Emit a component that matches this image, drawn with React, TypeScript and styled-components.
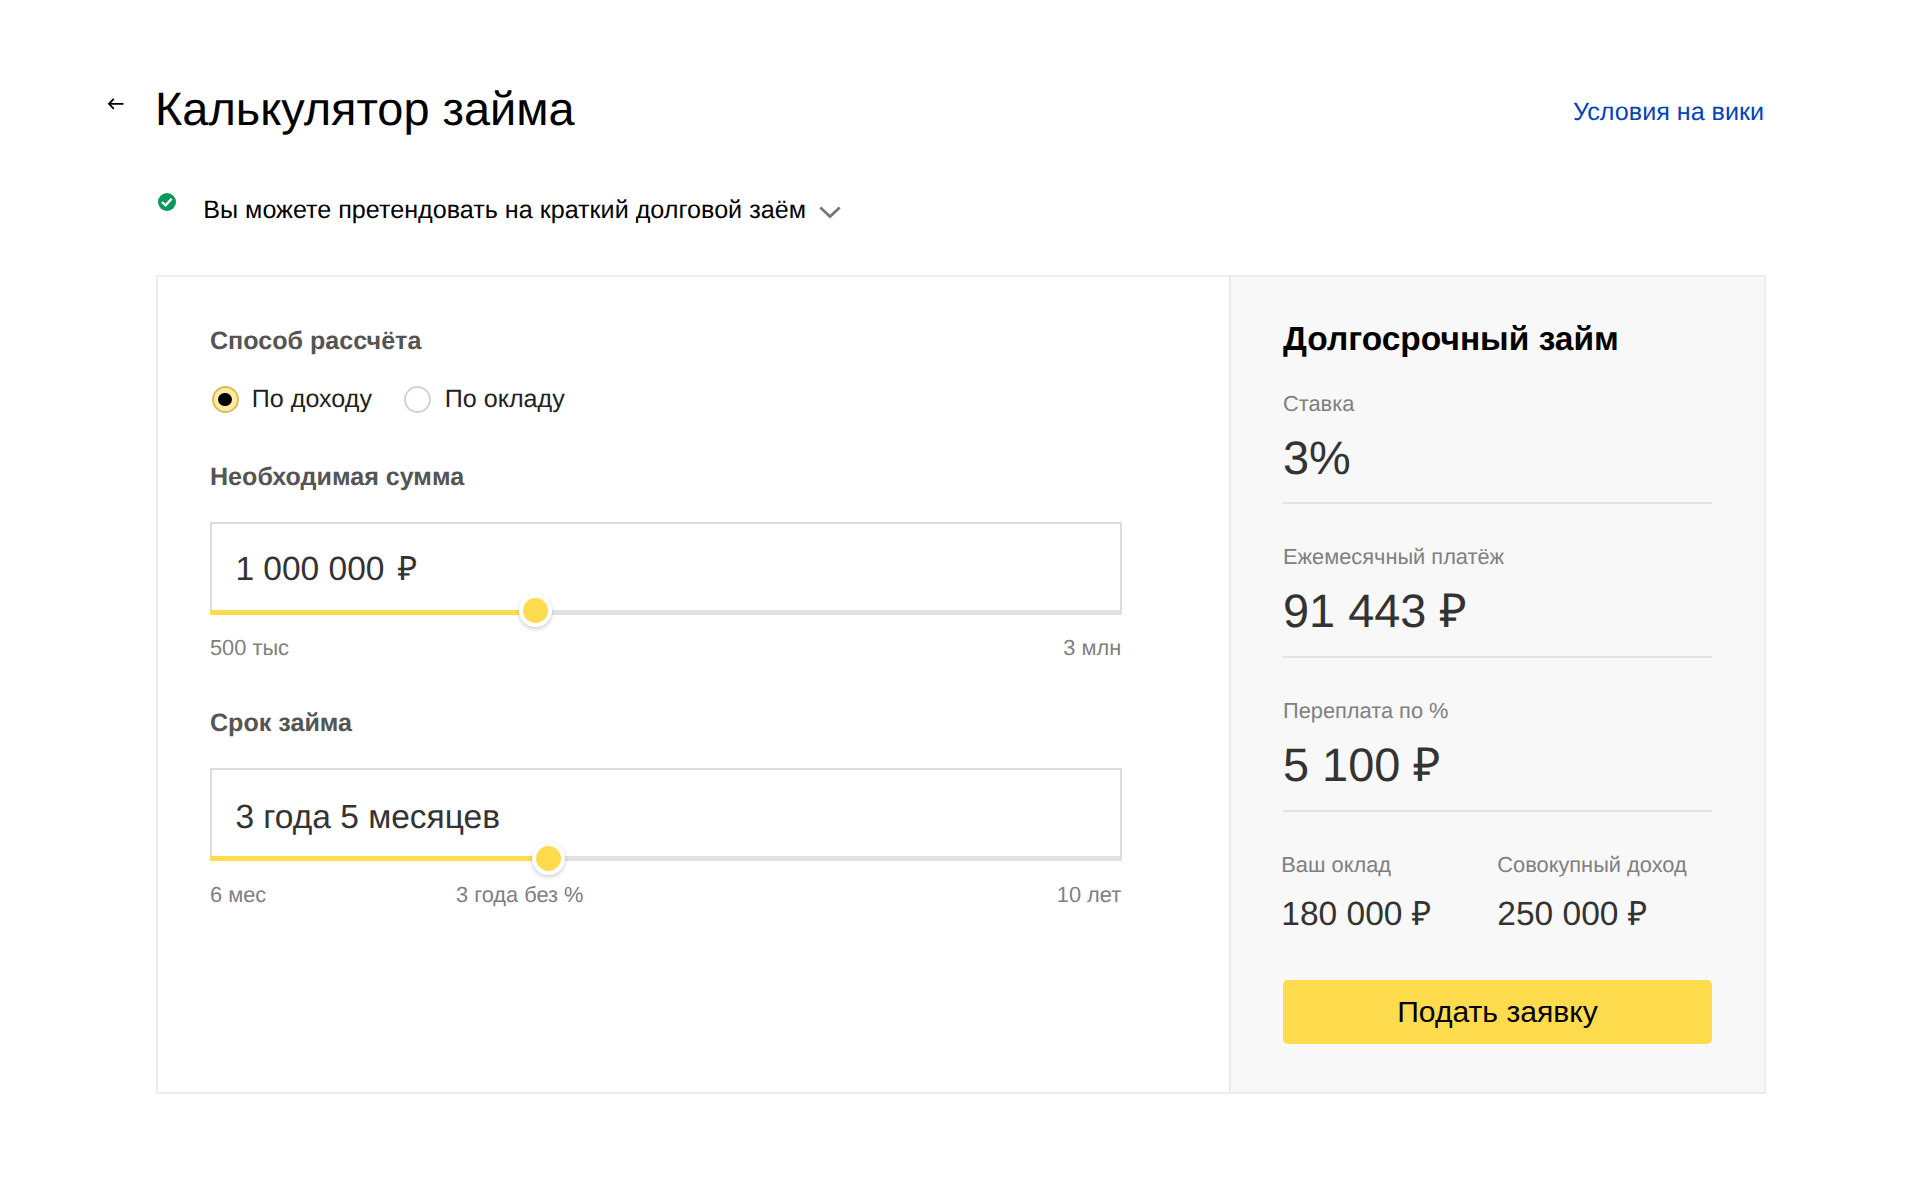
import React, { useState } from "react";
import styled, { createGlobalStyle } from "styled-components";

const GlobalStyle = createGlobalStyle`
  * { box-sizing: border-box; }
  body {
    margin: 0;
    background: #fff;
    color: #000;
    font-family: "Liberation Sans", Arial, sans-serif;
    text-rendering: geometricPrecision;
  }
  h1, h2, h3, p { margin: 0; }
`;

const Page = styled.main`
  width: 1920px;
  height: 1187px;
  padding-top: 79px;
  overflow: hidden;
`;

const Header = styled.header`
  display: flex;
  align-items: flex-start;
  height: 60px;
  padding: 0 156px 0 106px;
`;

const BackButton = styled.a`
  display: block;
  width: 20px;
  height: 14px;
  margin: 18px 29px 0 0;
  svg { display: block; }
`;

const Title = styled.h1`
  flex: 1;
  font-size: 46.9px;
  font-weight: 400;
  line-height: 61px;
  white-space: nowrap;
`;

const WikiLink = styled.a`
  margin-top: 3px;
  font-size: 25.13px;
  line-height: 61px;
  color: #04b;
  white-space: nowrap;
`;

const Status = styled.div`
  display: flex;
  align-items: flex-start;
  height: 30px;
  margin: 55px 0 51px;
  padding-left: 157.6px;
`;

const StatusText = styled.p`
  margin: 1px 13px 0 27.7px;
  font-size: 25.15px;
  line-height: 30px;
  white-space: nowrap;
`;

const CheckIcon = styled.svg`
  margin-top: -1px;
`;

const ChevronIcon = styled.svg`
  margin-top: 12px;
`;

const Card = styled.section`
  display: flex;
  width: 1610px;
  height: 819px;
  margin-left: 156px;
  border: 2px solid #ededed;
`;

const Form = styled.div`
  flex: 1;
  padding: 48px 0 0 52px;
`;

const FieldLabel = styled.h3`
  font-size: 25.1px;
  font-weight: 700;
  line-height: 32px;
  color: #555;
`;

const RadioGroup = styled.div`
  display: flex;
  gap: 32.5px;
  height: 27px;
  margin: 29px 0 48px;
  padding-left: 1.5px;
`;

const RadioOption = styled.label`
  display: flex;
  align-items: center;
  gap: 13.3px;
  font-size: 25.1px;
  line-height: 25px;
  color: #222;
  white-space: nowrap;
`;

const RadioMark = styled.span<{ $checked: boolean }>`
  display: flex;
  align-items: center;
  justify-content: center;
  width: 27px;
  height: 27px;
  border: 2px solid ${(p) => (p.$checked ? "#d6bd62" : "#d3d3d3")};
  border-radius: 50%;
  background: ${(p) => (p.$checked ? "#ffeba0" : "#fff")};
  &::after {
    content: "";
    width: 13.5px;
    height: 13.5px;
    border-radius: 50%;
    background: ${(p) => (p.$checked ? "#000" : "transparent")};
  }
`;

const RadioText = styled.span`
  margin-top: -1px;
`;

const SliderField = styled.div`
  width: 912px;
  & + & { margin-top: 47px; }
`;

const SliderBox = styled.div<{ $inset: number }>`
  position: relative;
  height: 93px;
  margin-top: 29px;
  padding: ${(p) => p.$inset - 2}px 0 0 23.4px;
  border: 2px solid #dcdcdc;
  border-bottom: 5px solid #e2e2e2;
  font-size: 33.5px;
  line-height: 40px;
  color: #333;
`;

const Currency = styled.span`
  margin-left: 4px;
`;

const Fill = styled.span`
  position: absolute;
  left: -2px;
  bottom: -5px;
  height: 5px;
  background: #ffdb4d;
`;

const Thumb = styled.span<{ $drop: number }>`
  position: absolute;
  bottom: ${(p) => -17 - p.$drop}px;
  width: 33px;
  height: 33px;
  margin-left: -18.5px;
  border: 4.6px solid #fff;
  border-radius: 50%;
  background: #ffdb4d;
  box-shadow: 0 2px 4px rgba(0, 0, 0, 0.2);
`;

const Scale = styled.div<{ $drop: number }>`
  position: relative;
  display: flex;
  justify-content: space-between;
  margin-top: ${(p) => 21 + p.$drop / 2}px;
  margin-bottom: ${(p) => -p.$drop / 2}px;
  padding-right: 0.8px;
  font-size: 21.8px;
  line-height: 24px;
  color: #808080;
`;

const ScaleMark = styled.span`
  position: absolute;
  top: 0;
  white-space: nowrap;
`;

const Summary = styled.aside`
  width: 535px;
  padding: 43px 52px 0;
  border-left: 2px solid #ebebeb;
  background: #f8f8f8;
`;

const SummaryTitle = styled.h2`
  margin-bottom: 32px;
  font-size: 33.5px;
  font-weight: 700;
  line-height: 40px;
  white-space: nowrap;
`;

const Caption = styled.p`
  font-size: 21.8px;
  line-height: 24px;
  color: #808080;
  white-space: nowrap;
`;

const Stat = styled.div<{ $first?: boolean }>`
  margin-bottom: 41px;
  padding-bottom: ${(p) => (p.$first ? 16 : 17)}px;
  border-bottom: 2px solid #e4e4e4;
`;

const StatValue = styled.p`
  margin-top: 14px;
  font-size: 46.9px;
  line-height: 56px;
  color: #333;
`;

const Incomes = styled.div`
  display: grid;
  grid-template-columns: 216px 1fr;
  margin: 0 0 45px -1.7px;
`;

const IncomeValue = styled.p`
  margin-top: 18px;
  font-size: 33.5px;
  line-height: 40px;
  color: #333;
  white-space: nowrap;
`;

const SubmitButton = styled.button`
  display: block;
  width: 100%;
  height: 64px;
  padding: 0;
  border: 0;
  border-radius: 5px;
  background: #ffdb4d;
  color: #000;
  font-family: inherit;
  font-size: 30.1px;
  line-height: 64px;
`;

interface SliderProps {
  label: string;
  value: string;
  currency?: string;
  min: string;
  max: string;
  mark?: { text: string; left: number };
  position: number;
  inset: number;
  drop: number;
}

function Slider({ label, value, currency, min, max, mark, position, inset, drop }: SliderProps) {
  return (
    <SliderField>
      <FieldLabel>{label}</FieldLabel>
      <SliderBox $inset={inset}>
        {value}
        {currency && <Currency> {currency}</Currency>}
        <Fill style={{ width: position }} />
        <Thumb $drop={drop} style={{ left: position }} />
      </SliderBox>
      <Scale $drop={drop}>
        <span>{min}</span>
        {mark && <ScaleMark style={{ left: mark.left }}>{mark.text}</ScaleMark>}
        <span>{max}</span>
      </Scale>
    </SliderField>
  );
}

const methods = ["По доходу", "По окладу"];

const stats = [
  { caption: "Ставка", value: "3%" },
  { caption: "Ежемесячный платёж", value: "91 443 ₽" },
  { caption: "Переплата по %", value: "5 100 ₽" },
];

const incomes = [
  { caption: "Ваш оклад", value: "180 000 ₽" },
  { caption: "Совокупный доход", value: "250 000 ₽" },
];

export default function App() {
  const [method, setMethod] = useState(methods[0]);

  return (
    <>
      <GlobalStyle />
      <Page>
        <Header>
          <BackButton>
            <svg width="20" height="14" viewBox="0 0 20 14" fill="none" stroke="#000" strokeWidth="1.8">
              <path d="M17.5 6.8H3M7.8 1.8L2.9 6.8l4.9 5" />
            </svg>
          </BackButton>
          <Title>Калькулятор займа</Title>
          <WikiLink>Условия на вики</WikiLink>
        </Header>

        <Status>
          <CheckIcon width="18" height="18" viewBox="0 0 18 18" fill="none">
            <circle cx="9" cy="9" r="9" fill="#089858" />
            <path d="M4 9l3.6 3.4 6-6.6" stroke="#fff" strokeWidth="2.4" />
          </CheckIcon>
          <StatusText>Вы можете претендовать на краткий долговой заём</StatusText>
          <ChevronIcon width="22" height="13" viewBox="0 0 22 13" fill="none" stroke="#777" strokeWidth="2.7">
            <path d="M1.3 1.6L11 10.6l9.7-9" />
          </ChevronIcon>
        </Status>

        <Card>
          <Form>
            <FieldLabel>Способ рассчёта</FieldLabel>
            <RadioGroup>
              {methods.map((name) => (
                <RadioOption key={name} onClick={() => setMethod(name)}>
                  <RadioMark $checked={name === method} />
                  <RadioText>{name}</RadioText>
                </RadioOption>
              ))}
            </RadioGroup>
            <Slider
              label="Необходимая сумма"
              value="1 000 000"
              currency="₽"
              min="500 тыс"
              max="3 млн"
              position={325}
              inset={28}
              drop={0}
            />
            <Slider
              label="Срок займа"
              value="3 года 5 месяцев"
              min="6 мес"
              max="10 лет"
              mark={{ text: "3 года без %", left: 246 }}
              position={338.5}
              inset={30}
              drop={2}
            />
          </Form>

          <Summary>
            <SummaryTitle>Долгосрочный займ</SummaryTitle>
            {stats.map((s, i) => (
              <Stat key={s.caption} $first={i === 0}>
                <Caption>{s.caption}</Caption>
                <StatValue>{s.value}</StatValue>
              </Stat>
            ))}
            <Incomes>
              {incomes.map((s) => (
                <div key={s.caption}>
                  <Caption>{s.caption}</Caption>
                  <IncomeValue>{s.value}</IncomeValue>
                </div>
              ))}
            </Incomes>
            <SubmitButton type="button">Подать заявку</SubmitButton>
          </Summary>
        </Card>
      </Page>
    </>
  );
}
